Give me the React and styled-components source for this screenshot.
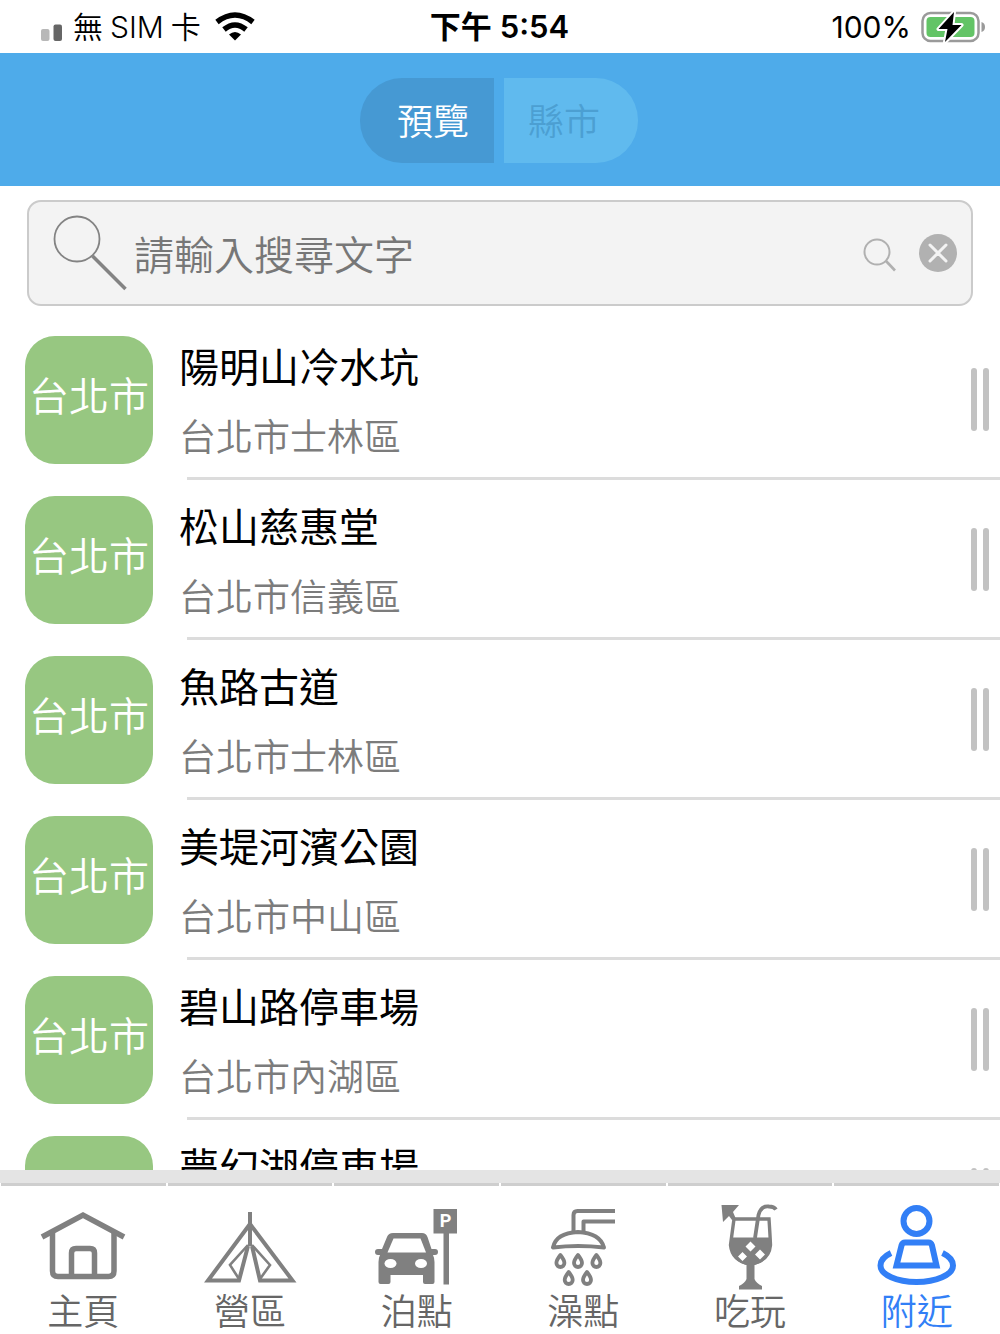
import React, { useState } from "react";
import styled, { createGlobalStyle, css } from "styled-components";

const GlobalStyle = createGlobalStyle`
  *, *::before, *::after { box-sizing: border-box; }
  body {
    margin: 0;
    background: #fff;
    color: #000;
    font-family: Inter, "Noto Sans CJK TC", sans-serif;
  }
  button, input { font: inherit; }
`;

const Screen = styled.div`
  display: flex;
  flex-direction: column;
  height: 100vh;
  overflow: hidden;
`;

const StatusBar = styled.div`
  display: grid;
  grid-template-columns: 1fr auto 1fr;
  align-items: center;
  flex: none;
  height: 53px;
  padding: 0 15px 0 40px;
  font-size: 30px;
  line-height: 40px;
`;

const StatusGroup = styled.div`
  display: flex;
  align-items: center;
  gap: 8px;
  justify-content: ${(p) => (p.$end ? "flex-end" : "flex-start")};
`;

const Clock = styled.time`
  display: flex;
  gap: 8px;
  padding-right: 26px;
  font-size: 31px;
  font-weight: 600;
`;

const Carrier = styled.span`
  display: flex;
  gap: 7px;
  margin: 0 6px 0 3px;
  font-weight: 350;
`;

const Header = styled.header`
  display: flex;
  justify-content: center;
  align-items: center;
  gap: 10px;
  flex: none;
  height: 133px;
  padding: 2px 2px 0 0;
  background: #4eabea;
`;

const Segment = styled.button`
  width: 134px;
  height: 85px;
  border: 0;
  padding: ${(p) => (p.$side === "left" ? "0 0 4px 12px" : "0 14px 4px 0")};
  border-radius: ${(p) => (p.$side === "left" ? "42px 0 0 42px" : "0 42px 42px 0")};
  background: ${(p) => (p.$active ? "#4699d3" : "#60baee")};
  color: ${(p) => (p.$active ? "#fff" : "#4c9fd2")};
  font-size: 36px;
  font-weight: 350;
  cursor: pointer;
`;

const SearchArea = styled.div`
  flex: none;
  padding: 14px 27px;
`;

const SearchBox = styled.form`
  display: flex;
  align-items: center;
  height: 106px;
  padding: 0 14px 0 24px;
  border: 2px solid #cbcbcb;
  border-radius: 14px;
  background: #f3f3f3;
`;

const SearchLabel = styled.label`
  display: flex;
  flex: none;
  margin-right: 5px;
`;

const SearchInput = styled.input`
  flex: 1;
  min-width: 0;
  height: 64px;
  padding: 4px 0 0;
  border: 0;
  outline: 0;
  background: transparent;
  color: #333;
  font-size: 40px;
  font-weight: 350;
  &::placeholder { color: #777; opacity: 1; }
`;

const IconButton = styled.button`
  display: flex;
  flex: none;
  margin-left: 20px;
  padding: 0;
  border: 0;
  background: transparent;
  cursor: pointer;
`;

const List = styled.ul`
  flex: 1;
  min-height: 0;
  margin: 0;
  padding: 0;
  overflow-y: auto;
  scrollbar-width: none;
  list-style: none;
`;

const Item = styled.li`
  &::after {
    content: "";
    display: block;
    height: 3px;
    margin-left: 187px;
    background: #dcdcdc;
  }
`;

const Row = styled.div`
  display: flex;
  align-items: center;
  height: 157px;
  padding: 2px 9px 0 25px;
`;

const CityTile = styled.span`
  display: flex;
  justify-content: center;
  align-items: center;
  flex: none;
  width: 128px;
  height: 128px;
  padding-bottom: 12px;
  border-radius: 30px;
  background: #97c781;
  color: #fff;
  font-size: 40px;
  font-weight: 350;
  white-space: nowrap;
`;

const Texts = styled.div`
  flex: 1;
  align-self: flex-start;
  min-width: 0;
  padding: 16px 0 0 26px;
  line-height: 60px;
`;

const Title = styled.h2`
  margin: 0 0 10px;
  font-size: 40px;
  font-weight: 400;
`;

const District = styled.p`
  margin: 0;
  color: #7c7c7c;
  font-size: 37px;
  font-weight: 350;
`;

const Handle = styled.button`
  display: flex;
  gap: 6px;
  padding: 0 2px;
  border: 0;
  background: transparent;
  cursor: grab;
  &::before, &::after {
    content: "";
    width: 6px;
    height: 63px;
    border-radius: 3px;
    background: #c2c2c2;
  }
`;

const TabBar = styled.nav`
  display: flex;
  gap: 2px;
  flex: none;
  padding: 0 1px;
  border-top: 13px solid #e4e4e4;
`;

const Tab = styled.a`
  display: flex;
  flex: 1;
  flex-direction: column;
  align-items: center;
  padding-top: 16px;
  border-top: 3px solid #cecece;
  color: #666;
  font-size: 36px;
  font-weight: 350;
  line-height: 44px;
  text-decoration: none;
  ${(p) =>
    p.$active &&
    css`
      color: #327ff6;
    `}
`;

const TabIcon = styled.svg`
  display: block;
  width: 96px;
  height: 88px;
  color: ${(p) => (p.$active ? "#327ff6" : "#808080")};
`;

const SignalIcon = () => (
  <svg width="22" height="30" viewBox="0 0 22 30" aria-hidden="true">
    <rect x="1" y="17" width="8.500" height="12" rx="2" fill="#b8b8b8" />
    <rect x="13.500" y="12.500" width="8.500" height="16.500" rx="2" fill="#666" />
  </svg>
);

const WifiIcon = () => (
  <svg width="40" height="29" viewBox="0 0 40 29" fill="none" stroke="#000" strokeWidth="5.500" aria-hidden="true">
    <path d="M2 10Q20-4 38 10" />
    <path d="M9 17.500Q20 8.500 31 17.500" />
    <path d="M20 28.500L14 22.500Q20 17.500 26 22.500Z" fill="#000" stroke="none" />
  </svg>
);

const BatteryIcon = () => (
  <svg width="66" height="34" viewBox="0 0 66 34" aria-hidden="true">
    <rect x="3.500" y="3" width="56" height="28" rx="8" fill="#fff" stroke="#9a9a9a" strokeWidth="2.500" />
    <rect x="7.500" y="7" width="48" height="20" rx="4" fill="#63c466" />
    <path d="M62.500 12Q66 13 66 17T62.500 22Z" fill="#9a9a9a" />
    <path d="M35 2L19.500 19H28.500L26 32L42.500 15H33.500Z" fill="#000" stroke="#fff" strokeWidth="4" paintOrder="stroke" strokeLinejoin="round" />
  </svg>
);

const BigSearchIcon = () => (
  <svg width="76" height="78" viewBox="0 0 76 78" fill="none" stroke="#838383" aria-hidden="true">
    <circle cx="24" cy="25" r="22.500" strokeWidth="1.800" />
    <path d="M39.500 42L72.500 75" strokeWidth="3.600" />
  </svg>
);

const SmallSearchIcon = () => (
  <svg width="38" height="38" viewBox="0 0 38 38" fill="none" stroke="#b0b0b0" aria-hidden="true">
    <circle cx="16" cy="18" r="12.500" strokeWidth="2" />
    <path d="M25 27L34 36.500" strokeWidth="2.600" />
  </svg>
);

const ClearIcon = () => (
  <svg width="38" height="38" viewBox="0 0 38 38" aria-hidden="true">
    <circle cx="19" cy="19" r="19" fill="#b1b1b1" />
    <path d="M11 11L27 27M27 11L11 27" stroke="#f3f3f3" strokeWidth="3" strokeLinecap="round" />
  </svg>
);

const DROPS = [[25.4, 59], [43, 59], [61.4, 59], [33.7, 76], [52, 76]];

const drawings = {
  home: (
    <g fill="none" stroke="currentColor" strokeWidth="5.500" strokeLinejoin="round">
      <path d="M7 35L48 13L89 35" strokeLinejoin="miter" />
      <path d="M17.500 31V69Q17.500 74.500 23 74.500H73.500Q79 74.500 79 69V31" />
      <path d="M36.500 74V51Q36.500 46.500 41 46.500H55Q59.500 46.500 59.500 51V74" />
    </g>
  ),
  camp: (
    <g fill="none" stroke="currentColor" strokeWidth="4">
      <path d="M48 10V44" />
      <path d="M48 22L6 78.500H37L46 44" />
      <path d="M48 22L90.500 78.500H58L50 44" />
      <path d="M46 43L28 63L37 77" strokeWidth="2.600" />
      <path d="M50 43L68 63L58 77" strokeWidth="2.600" />
    </g>
  ),
  parking: (
    <g fill="currentColor">
      <path d="M24 31H53Q57 31 58.500 35L62.500 47H66Q69 47 69 50T66 53H64Q65.500 56 65.500 60V80Q65.500 82 63.500 82H56Q54 82 54 80V73H21.500V80Q21.500 82 19.500 82H11.500Q9.500 82 9.500 80V60Q9.500 56 11 53H9Q6 53 6 50T9 47H13L18 35Q19.500 31 24 31Z" />
      <path d="M24.500 36.500H51.500L57 50.500H18.500Z" fill="#fff" />
      <ellipse cx="21.500" cy="61.500" rx="6" ry="4.500" fill="#fff" />
      <ellipse cx="52" cy="61.500" rx="6" ry="4.500" fill="#fff" />
      <rect x="64.500" y="7" width="23.500" height="24.500" />
      <rect x="74.500" y="31" width="5.500" height="51.500" />
      <text x="76.500" y="25" fill="#fff" fontFamily="Roboto, sans-serif" fontSize="18" fontWeight="700" textAnchor="middle">P</text>
    </g>
  ),
  shower: (
    <g fill="none" stroke="currentColor" strokeWidth="4" strokeLinejoin="round">
      <path d="M38.500 30V13Q38.500 9 42.500 9H80" />
      <path d="M48.500 29V19.500H80" />
      <path d="M18 45.500Q21 31 43 30Q65 31 69 45.500Q43 42.500 18 45.500Z" />
      {DROPS.map(([x, y]) => (
        <path key={`${x}-${y}`} d={`M${x} ${y - 6}Q${x + 4} ${y - 1} ${x + 4} ${y + 2}A4 4 0 0 1 ${x - 4} ${y + 2}Q${x - 4} ${y - 1} ${x} ${y - 6}Z`} strokeWidth="3.800" />
      ))}
    </g>
  ),
  play: (
    <g fill="currentColor">
      <path d="M19.500 3H37L31 10L34 17L30 18L27 14L21 20Z" />
      <path d="M32 17H67Q68 32 68.500 43Q67 59 48.500 62Q30 59 28.500 43Q30 32 32 17Z" fill="none" stroke="currentColor" strokeWidth="3.400" />
      <path d="M28.500 35.500H68.500V45Q66 60 52.500 63V77Q54 81 60 84V87.500H37V84Q43 81 44.500 77V63Q31 60 28.500 45Z" />
      <path d="M53 36L56.500 13Q59 3.500 67 4.500Q72 4.500 74 7.500" fill="none" stroke="currentColor" strokeWidth="3.800" />
      <path d="M48.500 39.500L53.500 44.500L48.500 49.500L43.500 44.500ZM40.500 50L45 54.500L40.500 59L36 54.500ZM58 47.500L63 52.500L58 57.500L53 52.500Z" fill="#fff" />
    </g>
  ),
  nearby: (
    <g fill="none" stroke="currentColor" strokeWidth="6">
      <circle cx="47.500" cy="19" r="13" />
      <path d="M36 40.500H59.500Q62 40.500 63 43.500L67.500 63.500H27.500L32.500 43.500Q33.500 40.500 36 40.500Z" />
      <path d="M22 51Q11.500 56 11.500 63.500C11.500 73 28 80 47.500 80S84 73 84 63.500Q84 56 73.500 51" />
    </g>
  ),
};

const PLACES = [
  { name: "陽明山冷水坑", city: "台北市", district: "台北市士林區" },
  { name: "松山慈惠堂", city: "台北市", district: "台北市信義區" },
  { name: "魚路古道", city: "台北市", district: "台北市士林區" },
  { name: "美堤河濱公園", city: "台北市", district: "台北市中山區" },
  { name: "碧山路停車場", city: "台北市", district: "台北市內湖區" },
  { name: "夢幻湖停車場" },
];

const TABS = [
  { id: "home", label: "主頁" },
  { id: "camp", label: "營區" },
  { id: "parking", label: "泊點" },
  { id: "shower", label: "澡點" },
  { id: "play", label: "吃玩" },
  { id: "nearby", label: "附近" },
];

export default function App() {
  const [mode, setMode] = useState("preview");
  const [tab, setTab] = useState("nearby");
  const [query, setQuery] = useState("");

  return (
    <Screen lang="zh-Hant">
      <GlobalStyle />
      <StatusBar>
        <StatusGroup>
          <SignalIcon />
          <Carrier><span>無</span><span>SIM</span><span>卡</span></Carrier>
          <WifiIcon />
        </StatusGroup>
        <Clock><span>下午</span><span>5:54</span></Clock>
        <StatusGroup $end>
          <span>100%</span>
          <BatteryIcon />
        </StatusGroup>
      </StatusBar>

      <Header>
        <Segment type="button" $side="left" $active={mode === "preview"} onClick={() => setMode("preview")}>預覽</Segment>
        <Segment type="button" $side="right" $active={mode === "county"} onClick={() => setMode("county")}>縣市</Segment>
      </Header>

      <SearchArea>
        <SearchBox role="search" onSubmit={(e) => e.preventDefault()}>
          <SearchLabel htmlFor="query" aria-label="搜尋"><BigSearchIcon /></SearchLabel>
          <SearchInput id="query" type="text" placeholder="請輸入搜尋文字" value={query} onChange={(e) => setQuery(e.target.value)} />
          <IconButton type="submit" aria-label="搜尋"><SmallSearchIcon /></IconButton>
          <IconButton type="button" aria-label="清除" onClick={() => setQuery("")}><ClearIcon /></IconButton>
        </SearchBox>
      </SearchArea>

      <List>
        {PLACES.map((place) => (
          <Item key={place.name}>
            <Row>
              <CityTile>{place.city}</CityTile>
              <Texts>
                <Title>{place.name}</Title>
                {place.district && <District>{place.district}</District>}
              </Texts>
              <Handle type="button" aria-label="移動" />
            </Row>
          </Item>
        ))}
      </List>

      <TabBar>
        {TABS.map(({ id, label }) => (
          <Tab key={id} href={`#${id}`} $active={tab === id} onClick={() => setTab(id)}>
            <TabIcon $active={tab === id} viewBox="0 0 96 88" aria-hidden="true">{drawings[id]}</TabIcon>
            {label}
          </Tab>
        ))}
      </TabBar>
    </Screen>
  );
}
